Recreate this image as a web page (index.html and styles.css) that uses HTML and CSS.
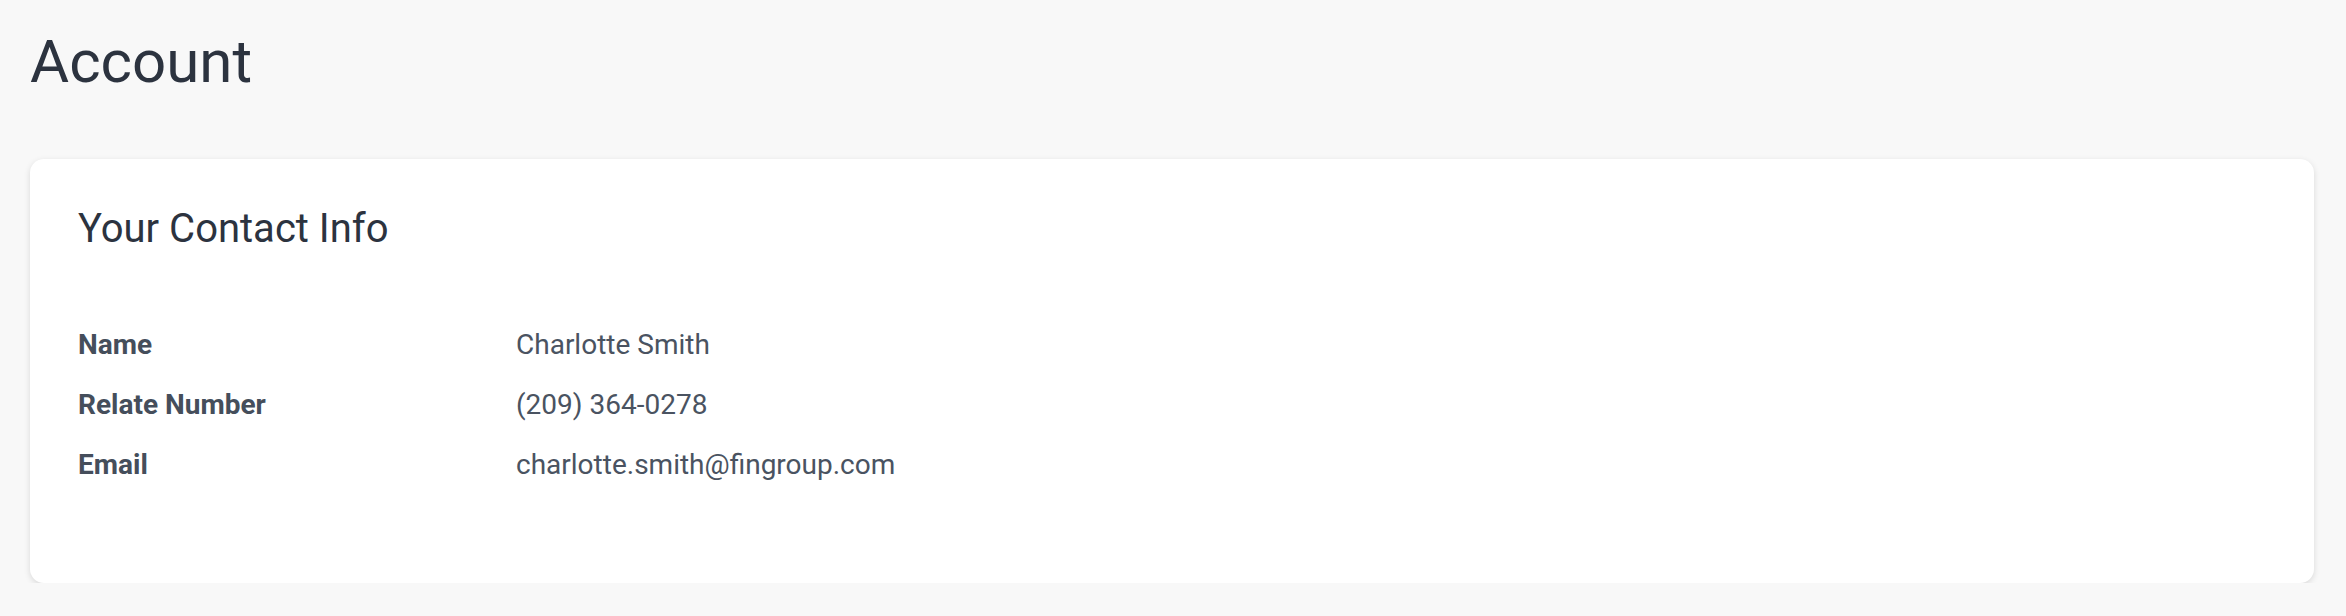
FILE: index.html
```html
<!DOCTYPE html>
<html lang="en">
<head>
<meta charset="utf-8">
<title>Account</title>
<link rel="stylesheet" href="styles.css">
</head>
<body>
<main class="page">
  <h1 class="page-title">Account</h1>
  <section class="card">
    <h2 class="card-title">Your Contact Info</h2>
    <dl class="info">
      <div class="info-row"><dt>Name</dt><dd>Charlotte Smith</dd></div>
      <div class="info-row"><dt>Relate Number</dt><dd>(209) 364-0278</dd></div>
      <div class="info-row"><dt>Email</dt><dd>charlotte.smith@fingroup.com</dd></div>
    </dl>
  </section>
</main>
</body>
</html>
```
FILE: styles.css
```css
html, body {
  margin: 0;
  padding: 0;
  background: #f8f8f8;
}
body {
  font-family: Roboto, "Noto Sans", sans-serif;
  color: #2d3440;
}
.page {
  padding: 26px 32px 0 30px;
}
.page-title {
  margin: 0;
  font-size: 60px;
  line-height: 72px;
  font-weight: 400;
  color: #2c333f;
}
.card {
  margin-top: 61px;
  background: #fff;
  border-radius: 14px;
  box-shadow: 0 2px 6px rgba(0, 0, 0, 0.13);
  padding: 47px 48px 98px;
}
.card-title {
  margin: 0;
  font-size: 40px;
  line-height: 46px;
  font-weight: 400;
  color: #2c333f;
}
.info {
  margin: 73px 0 0;
  display: flex;
  flex-direction: column;
  gap: 20px;
}
.info-row {
  display: grid;
  grid-template-columns: 438px 1fr;
  font-size: 28px;
  line-height: 40px;
}
.info-row dt {
  font-weight: 700;
  color: #454e5b;
}
.info-row dd {
  margin: 0;
  color: #4a5361;
}
```
